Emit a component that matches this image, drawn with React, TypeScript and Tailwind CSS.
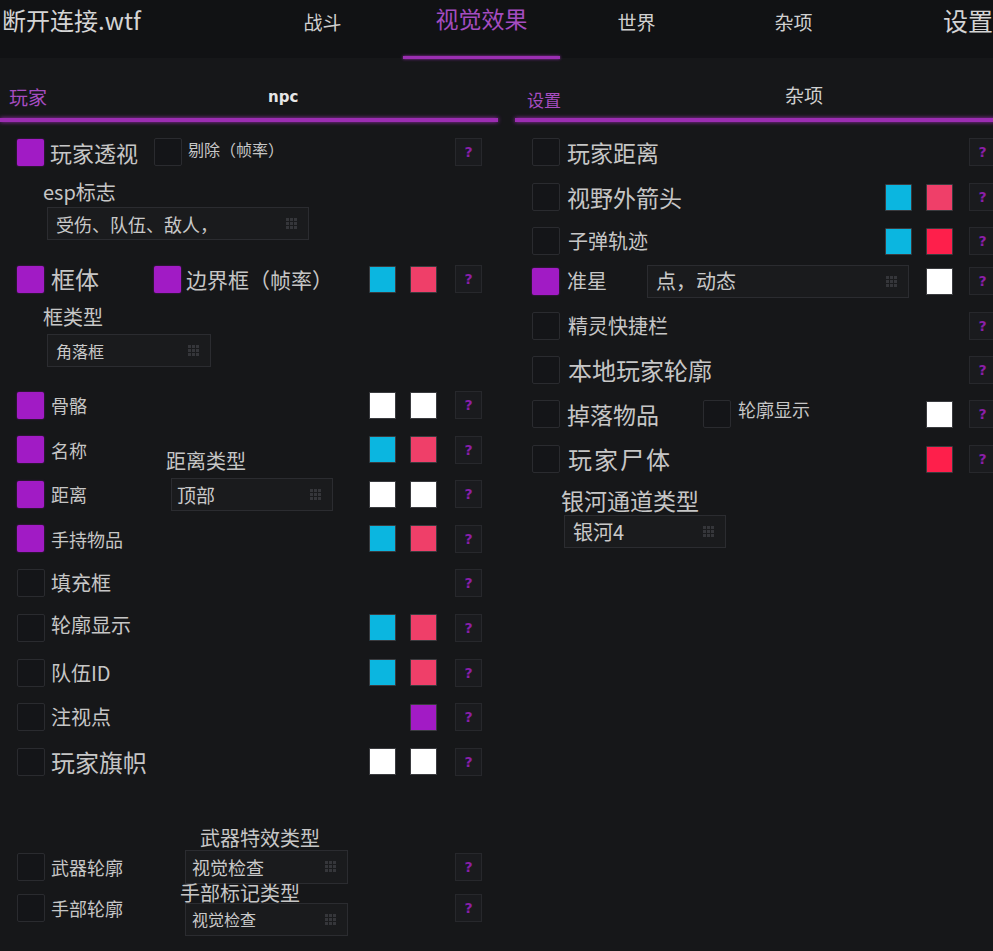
import React from "react";

function Check({ on }: { on?: boolean }) {
  return on ? (
    <div className="h-[27px] w-[27px] shrink-0 rounded-[2px] bg-[#a11bc5] shadow-[0_0_2px_#6a1482]" />
  ) : (
    <div className="h-[28px] w-[28px] shrink-0 rounded-[2px] border border-[#2a2b2f] bg-[#141518]" />
  );
}

function Swatch({ color }: { color: "cyan" | "pink" | "red" | "white" | "purple" }) {
  const cls =
    color === "cyan"
      ? "bg-[#0bb6e0]"
      : color === "pink"
      ? "bg-[#ef3f69]"
      : color === "red"
      ? "bg-[#fe1f4b]"
      : color === "white"
      ? "bg-[#ffffff]"
      : "bg-[#a21bc5]";
  return <div className={`h-[27px] w-[27px] shrink-0 rounded-[1px] border border-[#3a3b3f] ${cls}`} />;
}

function Help() {
  return (
    <div className="flex h-[28px] w-[27px] shrink-0 items-center justify-center border border-[#27282c] bg-[#1a1b1e] font-['DejaVu_Sans',sans-serif] text-[14px] font-bold leading-none text-[#8a1fa8]">
      ?
    </div>
  );
}

function GridIcon() {
  return (
    <div className="grid grid-cols-3 gap-[1px]">
      {Array.from({ length: 9 }).map((_, i) => (
        <div key={i} className="h-[3px] w-[3px] bg-[#35363a]" />
      ))}
    </div>
  );
}

function Drop({ className, text, textClass }: { className: string; text: string; textClass: string }) {
  return (
    <div
      className={`flex shrink-0 items-center justify-between border border-[#2b2c30] bg-[#1a1b1d] pr-[11px] text-[#c9c9c9] ${className}`}
    >
      <span className={`leading-none ${textClass}`}>{text}</span>
      <GridIcon />
    </div>
  );
}

export default function App() {
  return (
    <div className="min-h-[951px] w-[993px] overflow-hidden bg-[#161719] font-['Noto_Sans_CJK_SC','Noto_Sans',sans-serif] text-[#c6c6c6]">
      {/* Header */}
      <div className="flex h-[58px] w-[1064px] bg-[#111214]">
        <div className="w-[244px] pl-[2px] pt-[8px] text-[24px] leading-none text-[#d4d4d4]">断开连接.wtf</div>
        <div className="flex w-[157px] justify-center pt-[12px] text-[19px] leading-none text-[#d0d0d0]">战斗</div>
        <div className="ml-[2px] flex w-[157px] flex-col items-center">
          <div className="pt-[7px] text-[23px] leading-none text-[#a44cc0]">视觉效果</div>
          <div className="flex-1" />
          <div className="mb-[-1px] h-[3px] w-full bg-[#9b2fb2] shadow-[0_0_3px_#9b2fb2]" />
        </div>
        <div className="ml-[-2px] flex w-[157px] justify-center pt-[12px] text-[19px] leading-none text-[#d0d0d0]">世界</div>
        <div className="flex w-[157px] justify-center pt-[12px] text-[19px] leading-none text-[#d0d0d0]">杂项</div>
        <div className="pl-[71px] pt-[8px] text-[25px] leading-none text-[#d4d4d4]">设置</div>
      </div>

      <div className="flex w-[996px] gap-[17px]">
        {/* LEFT PANEL */}
        <div className="w-[498px] shrink-0">
          <div className="flex h-[60px] items-end">
            <span className="mb-[12px] ml-[9px] text-[19px] leading-none text-[#a64dc1]">玩家</span>
            <span className="mb-[13px] ml-[221px] font-['DejaVu_Sans',sans-serif] text-[15px] font-bold leading-none text-[#e6e6e6]">
              npc
            </span>
          </div>
          <div className="h-[4px] bg-[#9c2db2] shadow-[0_0_4px_#9c2db2]" />

          <div className="flex flex-col pl-[17px] pr-[16px]">
            {/* 玩家透视 */}
            <div className="mt-[16px] flex h-[28px] items-center">
              <Check on />
              <span className="ml-[6px] w-[104px] text-[22px] leading-none">玩家透视</span>
              <Check />
              <span className="mb-[6px] ml-[6px] text-[16px] leading-none">剔除（帧率）</span>
              <div className="ml-auto">
                <Help />
              </div>
            </div>

            <div className="ml-[26px] mt-[16px] text-[20px] leading-none">esp标志</div>
            <Drop className="ml-[30px] mt-[5px] h-[33px] w-[262px] pl-[8px]" text="受伤、队伍、敌人，" textClass="text-[18px]" />

            {/* 框体 */}
            <div className="mt-[25px] flex h-[28px] items-center">
              <Check on />
              <span className="ml-[7px] w-[103px] text-[24px] leading-none">框体</span>
              <Check on />
              <span className="ml-[5px] text-[21px] leading-none">边界框（帧率）</span>
              <div className="ml-auto flex gap-[14px]">
                <Swatch color="cyan" />
                <Swatch color="pink" />
              </div>
              <div className="ml-[18px]">
                <Help />
              </div>
            </div>

            <div className="ml-[26px] mt-[14px] text-[20px] leading-none">框类型</div>
            <Drop className="ml-[30px] mt-[7px] h-[33px] w-[164px] pl-[8px]" text="角落框" textClass="text-[16px]" />

            {/* 骨骼 */}
            <div className="mt-[24px] flex h-[28px] items-center">
              <Check on />
              <span className="ml-[7px] text-[18px] leading-none">骨骼</span>
              <div className="ml-auto flex gap-[14px]">
                <Swatch color="white" />
                <Swatch color="white" />
              </div>
              <div className="ml-[18px]">
                <Help />
              </div>
            </div>

            {/* 名称 */}
            <div className="mt-[16.6px] flex h-[28px] items-center">
              <Check on />
              <span className="ml-[7px] w-[115px] text-[18px] leading-none">名称</span>
              <span className="mt-[23px] text-[20px] leading-none">距离类型</span>
              <div className="ml-auto flex gap-[14px]">
                <Swatch color="cyan" />
                <Swatch color="pink" />
              </div>
              <div className="ml-[18px]">
                <Help />
              </div>
            </div>

            {/* 距离 */}
            <div className="mt-[16.6px] flex h-[28px] items-center">
              <Check on />
              <span className="ml-[7px] w-[120px] text-[18px] leading-none">距离</span>
              <Drop className="h-[33px] w-[162px] pl-[5px]" text="顶部" textClass="text-[19px]" />
              <div className="ml-auto flex gap-[14px]">
                <Swatch color="white" />
                <Swatch color="white" />
              </div>
              <div className="ml-[18px]">
                <Help />
              </div>
            </div>

            {/* 手持物品 */}
            <div className="mt-[16.6px] flex h-[28px] items-center">
              <Check on />
              <span className="ml-[7px] text-[18px] leading-none">手持物品</span>
              <div className="ml-auto flex gap-[14px]">
                <Swatch color="cyan" />
                <Swatch color="pink" />
              </div>
              <div className="ml-[18px]">
                <Help />
              </div>
            </div>

            {/* 填充框 */}
            <div className="mt-[16.6px] flex h-[28px] items-center">
              <Check />
              <span className="ml-[6px] text-[20px] leading-none">填充框</span>
              <div className="ml-auto">
                <Help />
              </div>
            </div>

            {/* 轮廓显示 */}
            <div className="mt-[16.6px] flex h-[28px] items-center">
              <Check />
              <span className="mb-[6px] ml-[6px] text-[20px] leading-none">轮廓显示</span>
              <div className="ml-auto flex gap-[14px]">
                <Swatch color="cyan" />
                <Swatch color="pink" />
              </div>
              <div className="ml-[18px]">
                <Help />
              </div>
            </div>

            {/* 队伍ID */}
            <div className="mt-[16.6px] flex h-[28px] items-center">
              <Check />
              <span className="ml-[6px] text-[20px] leading-none">队伍ID</span>
              <div className="ml-auto flex gap-[14px]">
                <Swatch color="cyan" />
                <Swatch color="pink" />
              </div>
              <div className="ml-[18px]">
                <Help />
              </div>
            </div>

            {/* 注视点 */}
            <div className="mt-[16.6px] flex h-[28px] items-center">
              <Check />
              <span className="ml-[6px] text-[20px] leading-none">注视点</span>
              <div className="ml-auto">
                <Swatch color="purple" />
              </div>
              <div className="ml-[18px]">
                <Help />
              </div>
            </div>

            {/* 玩家旗帜 */}
            <div className="mt-[16.6px] flex h-[28px] items-center">
              <Check />
              <span className="ml-[6px] text-[24px] leading-none">玩家旗帜</span>
              <div className="ml-auto flex gap-[14px]">
                <Swatch color="white" />
                <Swatch color="white" />
              </div>
              <div className="ml-[18px]">
                <Help />
              </div>
            </div>

            {/* 武器 */}
            <div className="ml-[183px] mt-[52px] text-[20px] leading-none">武器特效类型</div>
            <div className="mt-[2px] flex h-[34px] items-center">
              <Check />
              <span className="ml-[6px] w-[134px] text-[18px] leading-none">武器轮廓</span>
              <Drop className="h-[34px] w-[163px] pl-[6px]" text="视觉检查" textClass="text-[18px]" />
              <div className="ml-auto">
                <Help />
              </div>
            </div>

            {/* 手部 */}
            <div className="relative z-10 ml-[163px] mt-[-1px] text-[20px] leading-none">手部标记类型</div>
            <div className="mt-[-9px] flex items-start">
              <Check />
              <span className="ml-[6px] flex h-[28px] w-[134px] items-center text-[18px] leading-none">手部轮廓</span>
              <Drop className="mt-[9px] h-[33px] w-[163px] pl-[6px]" text="视觉检查" textClass="text-[16px]" />
              <div className="ml-auto">
                <Help />
              </div>
            </div>
          </div>
        </div>

        {/* RIGHT PANEL */}
        <div className="w-[481px] shrink-0">
          <div className="flex h-[60px] items-end">
            <span className="mb-[10px] ml-[12px] text-[17px] leading-none text-[#a64dc1]">设置</span>
            <span className="mb-[14px] ml-[224px] text-[19px] leading-none text-[#d0d0d0]">杂项</span>
          </div>
          <div className="h-[4px] bg-[#9c2db2] shadow-[0_0_4px_#9c2db2]" />

          <div className="flex flex-col pl-[17px]">
            {/* 玩家距离 */}
            <div className="mt-[16px] flex h-[28px] items-center">
              <Check />
              <span className="ml-[7px] text-[23px] leading-none">玩家距离</span>
              <div className="ml-auto">
                <Help />
              </div>
            </div>

            {/* 视野外箭头 */}
            <div className="mt-[17px] flex h-[28px] items-center">
              <Check />
              <span className="ml-[7px] text-[23px] leading-none">视野外箭头</span>
              <div className="ml-auto flex gap-[14px]">
                <Swatch color="cyan" />
                <Swatch color="pink" />
              </div>
              <div className="ml-[16px]">
                <Help />
              </div>
            </div>

            {/* 子弹轨迹 */}
            <div className="mt-[16px] flex h-[28px] items-center">
              <Check />
              <span className="ml-[8px] text-[20px] leading-none">子弹轨迹</span>
              <div className="ml-auto flex gap-[14px]">
                <Swatch color="cyan" />
                <Swatch color="red" />
              </div>
              <div className="ml-[16px]">
                <Help />
              </div>
            </div>

            {/* 准星 */}
            <div className="mt-[12px] flex h-[28px] items-center">
              <Check on />
              <span className="ml-[8px] w-[80px] text-[20px] leading-none">准星</span>
              <Drop className="h-[33px] w-[262px] pl-[8px]" text="点，动态" textClass="text-[20px]" />
              <div className="ml-auto">
                <Swatch color="white" />
              </div>
              <div className="ml-[16px]">
                <Help />
              </div>
            </div>

            {/* 精灵快捷栏 */}
            <div className="mt-[17px] flex h-[28px] items-center">
              <Check />
              <span className="ml-[8px] text-[20px] leading-none">精灵快捷栏</span>
              <div className="ml-auto">
                <Help />
              </div>
            </div>

            {/* 本地玩家轮廓 */}
            <div className="mt-[16px] flex h-[28px] items-center">
              <Check />
              <span className="ml-[8px] text-[24px] leading-none">本地玩家轮廓</span>
              <div className="ml-auto">
                <Help />
              </div>
            </div>

            {/* 掉落物品 */}
            <div className="mt-[16px] flex h-[28px] items-center">
              <Check />
              <span className="ml-[7px] w-[136px] text-[23px] leading-none">掉落物品</span>
              <Check />
              <span className="mb-[10px] ml-[7px] text-[18px] leading-none">轮廓显示</span>
              <div className="ml-auto">
                <Swatch color="white" />
              </div>
              <div className="ml-[16px]">
                <Help />
              </div>
            </div>

            {/* 玩家尸体 */}
            <div className="mt-[17px] flex h-[28px] items-center">
              <Check />
              <span className="ml-[8px] text-[24px] leading-none tracking-[2px]">玩家尸体</span>
              <div className="ml-auto">
                <Swatch color="red" />
              </div>
              <div className="ml-[16px]">
                <Help />
              </div>
            </div>

            <div className="ml-[29px] mt-[16px] text-[23px] leading-none">银河通道类型</div>
            <Drop className="ml-[32px] mt-[3px] h-[33px] w-[162px] pl-[8px]" text="银河4" textClass="text-[20px]" />
          </div>
        </div>
      </div>
    </div>
  );
}
